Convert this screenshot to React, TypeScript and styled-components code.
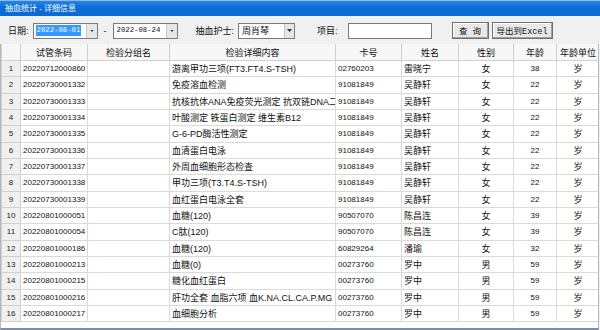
import { FC } from 'react'
import styled, { createGlobalStyle } from 'styled-components'

const GlobalStyle = createGlobalStyle`
    html, body {
        margin: 0;
        padding: 0;
        background: #f0f0f0;
    }
    body {
        font-family: "Liberation Sans", "Noto Sans CJK SC", sans-serif;
        font-size: 8.5px;
        color: #111;
    }
`;

interface RowData {
    barcode: string,
    group: string,
    detail: string,
    card: string,
    name: string,
    gender: string,
    age: string,
    unit: string
}

const rows: RowData[] = [
    { barcode: '20220712000860', group: '', detail: '游离甲功三项(FT3.FT4.S-TSH)', card: '02760203', name: '雷晓宁', gender: '女', age: '38', unit: '岁' },
    { barcode: '20220730001332', group: '', detail: '免疫溶血检测', card: '91081849', name: '吴静轩', gender: '女', age: '22', unit: '岁' },
    { barcode: '20220730001333', group: '', detail: '抗核抗体ANA免疫荧光测定 抗双链DNA二项', card: '91081849', name: '吴静轩', gender: '女', age: '22', unit: '岁' },
    { barcode: '20220730001334', group: '', detail: '叶酸测定 铁蛋白测定 维生素B12', card: '91081849', name: '吴静轩', gender: '女', age: '22', unit: '岁' },
    { barcode: '20220730001335', group: '', detail: 'G-6-PD酶活性测定', card: '91081849', name: '吴静轩', gender: '女', age: '22', unit: '岁' },
    { barcode: '20220730001336', group: '', detail: '血清蛋白电泳', card: '91081849', name: '吴静轩', gender: '女', age: '22', unit: '岁' },
    { barcode: '20220730001337', group: '', detail: '外周血细胞形态检查', card: '91081849', name: '吴静轩', gender: '女', age: '22', unit: '岁' },
    { barcode: '20220730001338', group: '', detail: '甲功三项(T3.T4.S-TSH)', card: '91081849', name: '吴静轩', gender: '女', age: '22', unit: '岁' },
    { barcode: '20220730001339', group: '', detail: '血红蛋白电泳全套', card: '91081849', name: '吴静轩', gender: '女', age: '22', unit: '岁' },
    { barcode: '20220801000051', group: '', detail: '血糖(120)', card: '90507070', name: '陈昌连', gender: '女', age: '39', unit: '岁' },
    { barcode: '20220801000054', group: '', detail: 'C肽(120)', card: '90507070', name: '陈昌连', gender: '女', age: '39', unit: '岁' },
    { barcode: '20220801000186', group: '', detail: '血糖(120)', card: '60829264', name: '潘瑜', gender: '女', age: '32', unit: '岁' },
    { barcode: '20220801000213', group: '', detail: '血糖(0)', card: '00273760', name: '罗中', gender: '男', age: '59', unit: '岁' },
    { barcode: '20220801000215', group: '', detail: '糖化血红蛋白', card: '00273760', name: '罗中', gender: '男', age: '59', unit: '岁' },
    { barcode: '20220801000216', group: '', detail: '肝功全套 血脂六项 血K.NA.CL.CA.P.MG 肾功', card: '00273760', name: '罗中', gender: '男', age: '59', unit: '岁' },
    { barcode: '20220801000217', group: '', detail: '血细胞分析', card: '00273760', name: '罗中', gender: '男', age: '59', unit: '岁' },
];

const columns = [
    { title: '', width: 19, align: 'center' },
    { title: '试管条码', width: 67, align: 'left' },
    { title: '检验分组名', width: 82, align: 'left' },
    { title: '检验详细内容', width: 166, align: 'left' },
    { title: '卡号', width: 66, align: 'left' },
    { title: '姓名', width: 57, align: 'left' },
    { title: '性别', width: 55, align: 'center' },
    { title: '年龄', width: 43, align: 'center' },
    { title: '年龄单位', width: 43, align: 'center' },
];

const Window = styled.div`
    width: 600px;
    height: 330px;
    display: flex;
    flex-direction: column;
    overflow: hidden;
    background: #f0f0f0;
`;

const TitleBar = styled.div`
    height: 15px;
    flex-shrink: 0;
    border-top: 1px solid #8fbbe8;
    border-bottom: 1px solid #e8f0f8;
    background: linear-gradient(#2a84e4, #0b6ed8 40%, #0a6ad4);
    color: #fff;
    font-size: 8px;
    line-height: 15px;
    padding-left: 5px;
`;

const Toolbar = styled.div`
    height: 27px;
    flex-shrink: 0;
    display: flex;
    align-items: center;
    padding-left: 8px;
    background: #f0f0f0;
`;

const Label = styled.span<{ $ml?: number }>`
    font-size: 9px;
    margin-left: ${p => p.$ml || 0}px;
    margin-right: 4px;
    white-space: nowrap;
`;

const Field = styled.div<{ $w: number }>`
    width: ${p => p.$w}px;
    height: 16px;
    box-sizing: border-box;
    border: 1px solid #7a7a7a;
    background: #fff;
    display: flex;
    align-items: center;
    font-size: 8.5px;
`;

const FieldText = styled.span<{ $selected?: boolean }>`
    margin-left: 2px;
    padding: 0 1px;
    line-height: 11px;
    background: ${p => p.$selected ? '#3399ff' : 'transparent'};
    color: ${p => p.$selected ? '#fff' : '#111'};
    font-family: "Liberation Mono", "Noto Sans CJK SC", monospace;
    font-size: 7.3px;
`;

const NurseText = styled.span`
    margin-left: 3px;
    font-size: 9px;
`;

const DropBtn = styled.div<{ $w: number }>`
    margin-left: auto;
    width: ${p => p.$w}px;
    height: 100%;
    box-sizing: border-box;
    border-left: 1px solid #c8c8c8;
    background: #e6e6e6;
    display: flex;
    align-items: center;
    justify-content: center;
`;

const Dash = styled.span`
    margin: 0 6px;
    font-size: 9px;
`;

const Button = styled.button<{ $w: number, $ml: number }>`
    width: ${p => p.$w}px;
    height: 17px;
    margin-left: ${p => p.$ml}px;
    padding: 0;
    border: 1px solid #707070;
    box-shadow: inset -1px -1px 0 #a0a0a0, inset 1px 1px 0 #fff;
    background: #e8e8e8;
    font-family: "Liberation Mono", "Noto Sans CJK SC", monospace;
    font-size: 8.5px;
    color: #111;
    white-space: nowrap;
`;

const GridWrap = styled.div`
    flex: 1;
    background: #fff;
    border-left: 1px solid #b8b8b8;
    border-right: 1px solid #b8b8b8;
    margin-right: 1px;
    overflow: hidden;
    border-bottom: 2px solid #7c8ea6;
`;

const Table = styled.table`
    table-layout: fixed;
    border-collapse: collapse;
    width: 597px;
`;

const HeadCell = styled.th`
    height: 16px;
    padding: 0;
    font-weight: normal;
    font-size: 9px;
    background: #f7f7f7;
    border: 1px solid #d0d0d0;
    border-top: none;
    text-align: center;
    white-space: nowrap;
    overflow: hidden;
`;

const Cell = styled.td<{ $align: string, $num?: boolean }>`
    height: 15.33px;
    padding: 0 2px;
    border: 1px solid #dadada;
    text-align: ${p => p.$align};
    white-space: nowrap;
    overflow: hidden;
    font-size: ${p => p.$num ? '8px' : '9px'};
    background: #fff;
`;

const IndexCell = styled.td`
    height: 15.33px;
    padding: 0;
    border: 1px solid #d0d0d0;
    background: #f0f0f0;
    text-align: center;
    font-size: 8px;
    color: #222;
`;

const Arrow: FC<{ size?: number }> = ({ size = 5 }) => (
    <svg width={size} height={size - 2} viewBox="0 0 5 3">
        <path d="M0 0 L5 0 L2.5 3 Z" fill="#333" />
    </svg>
);

const App: FC = () => {
    const isNum = (s: string) => /^[0-9]+$/.test(s);

    return (
        <Window>
            <GlobalStyle />
            <TitleBar>抽血统计 - 详细信息</TitleBar>
            <Toolbar>
                <Label>日期:</Label>
                <Field $w={65}>
                    <FieldText $selected>2022-08-01</FieldText>
                    <DropBtn $w={11}><Arrow size={4} /></DropBtn>
                </Field>
                <Dash>-</Dash>
                <Field $w={65}>
                    <FieldText>2022-08-24</FieldText>
                    <DropBtn $w={11}><Arrow size={4} /></DropBtn>
                </Field>
                <Label $ml={18}>抽血护士:</Label>
                <Field $w={57}>
                    <NurseText>周肖琴</NurseText>
                    <DropBtn $w={10}><Arrow size={5} /></DropBtn>
                </Field>
                <Label $ml={22}>项目:</Label>
                <Field $w={84} style={{ marginLeft: 6 }} />
                <Button $w={37} $ml={20}>查 询</Button>
                <Button $w={61} $ml={3}>导出到Excel</Button>
            </Toolbar>
            <GridWrap>
                <Table>
                    <colgroup>
                        {columns.map((c, i) => <col key={i} style={{ width: c.width }} />)}
                    </colgroup>
                    <thead>
                        <tr>
                            {columns.map((c, i) => <HeadCell key={i}>{c.title}</HeadCell>)}
                        </tr>
                    </thead>
                    <tbody>
                        {rows.map((r, index) => {
                            const values = [r.barcode, r.group, r.detail, r.card, r.name, r.gender, r.age, r.unit];
                            return (
                                <tr key={index}>
                                    <IndexCell>{index + 1}</IndexCell>
                                    {values.map((v, j) =>
                                        <Cell key={j} $align={columns[j + 1].align} $num={isNum(v)}>{v}</Cell>
                                    )}
                                </tr>
                            );
                        })}
                    </tbody>
                </Table>
            </GridWrap>
        </Window>
    )
}

export default App;
